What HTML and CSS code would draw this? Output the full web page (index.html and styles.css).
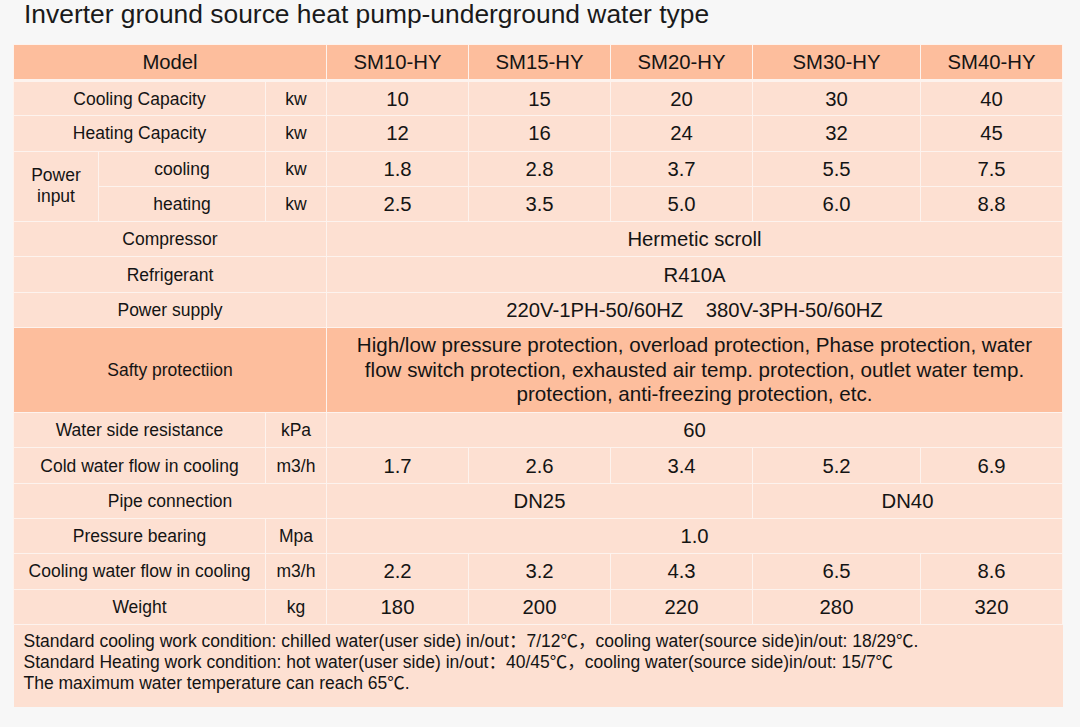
FILE: index.html
```html
<!DOCTYPE html>
<html>
<head>
<meta charset="utf-8">
<link rel="stylesheet" href="styles.css">
</head>
<body>
<h1 class="title">Inverter ground source heat pump-underground water type</h1>
<table class="spec">
  <colgroup>
    <col class="c0"><col class="c1"><col class="c2">
    <col class="cv"><col class="cv"><col class="cv"><col class="cw"><col class="cv">
  </colgroup>
  <tr class="head">
    <td colspan="3">Model</td>
    <td class="v">SM10-HY</td><td class="v">SM15-HY</td><td class="v">SM20-HY</td><td class="v">SM30-HY</td><td class="v">SM40-HY</td>
  </tr>
  <tr>
    <td colspan="2">Cooling Capacity</td><td>kw</td>
    <td class="v">10</td><td class="v">15</td><td class="v">20</td><td class="v">30</td><td class="v">40</td>
  </tr>
  <tr>
    <td colspan="2">Heating Capacity</td><td>kw</td>
    <td class="v">12</td><td class="v">16</td><td class="v">24</td><td class="v">32</td><td class="v">45</td>
  </tr>
  <tr>
    <td rowspan="2" class="pi">Power<br>input</td><td>cooling</td><td>kw</td>
    <td class="v">1.8</td><td class="v">2.8</td><td class="v">3.7</td><td class="v">5.5</td><td class="v">7.5</td>
  </tr>
  <tr>
    <td>heating</td><td>kw</td>
    <td class="v">2.5</td><td class="v">3.5</td><td class="v">5.0</td><td class="v">6.0</td><td class="v">8.8</td>
  </tr>
  <tr>
    <td colspan="3">Compressor</td><td colspan="5" class="v">Hermetic scroll</td>
  </tr>
  <tr>
    <td colspan="3">Refrigerant</td><td colspan="5" class="v">R410A</td>
  </tr>
  <tr>
    <td colspan="3">Power supply</td><td colspan="5" class="v">220V-1PH-50/60HZ&nbsp;&nbsp;&nbsp; 380V-3PH-50/60HZ</td>
  </tr>
  <tr class="safety">
    <td colspan="3">Safty protectiion</td>
    <td colspan="5" class="v sv">High/low pressure protection, overload protection, Phase protection, water<br>flow switch protection, exhausted air temp. protection, outlet water temp.<br>protection, anti-freezing protection, etc.</td>
  </tr>
  <tr>
    <td colspan="2">Water side resistance</td><td>kPa</td><td colspan="5" class="v">60</td>
  </tr>
  <tr>
    <td colspan="2">Cold water flow in cooling</td><td>m3/h</td>
    <td class="v">1.7</td><td class="v">2.6</td><td class="v">3.4</td><td class="v">5.2</td><td class="v">6.9</td>
  </tr>
  <tr>
    <td colspan="3">Pipe connection</td><td colspan="3" class="v">DN25</td><td colspan="2" class="v">DN40</td>
  </tr>
  <tr>
    <td colspan="2">Pressure bearing</td><td>Mpa</td><td colspan="5" class="v">1.0</td>
  </tr>
  <tr>
    <td colspan="2">Cooling water flow in cooling</td><td>m3/h</td>
    <td class="v">2.2</td><td class="v">3.2</td><td class="v">4.3</td><td class="v">6.5</td><td class="v">8.6</td>
  </tr>
  <tr>
    <td colspan="2">Weight</td><td>kg</td>
    <td class="v">180</td><td class="v">200</td><td class="v">220</td><td class="v">280</td><td class="v">320</td>
  </tr>
  <tr class="foot">
    <td colspan="8">Standard cooling work condition: chilled water(user side) in/out：7/12℃，cooling water(source side)in/out: 18/29℃.<br>Standard Heating work condition: hot water(user side) in/out：40/45℃，cooling water(source side)in/out: 15/7℃<br>The maximum water temperature can reach 65℃.</td>
  </tr>
</table>
</body>
</html>
```
FILE: styles.css
```css
html, body {
  margin: 0;
  padding: 0;
  background: #f7f7f7;
  font-family: "Liberation Sans", Arial, "Noto Sans CJK SC", sans-serif;
  color: #141414;
}
.title {
  margin: 0;
  padding-left: 24px;
  font-size: 26.4px;
  line-height: 28px;
  font-weight: normal;
  color: #1a1a1a;
}
.spec {
  margin: 16px 0 0 13px;
  width: 1048px;
  table-layout: fixed;
  border-collapse: collapse;
}
.c0 { width: 85px; }
.c1 { width: 167px; }
.c2 { width: 61px; }
.cv { width: 142px; }
.cw { width: 168px; }
.spec td {
  border: 1.5px solid #fdf3ee;
  background: #fde0d2;
  text-align: center;
  vertical-align: middle;
  font-size: 17.5px;
  padding: 0;
  line-height: 20px;
}
.spec tr { height: 35.3px; }
.spec td.v { font-size: 20.3px; }
.spec tr.head td {
  background: #fdbe9d;
  font-size: 20.3px;
  border-bottom-width: 3px;
}
.spec tr.head { height: 36px; }
.spec tr.safety td { background: #fdbe9d; }
.spec tr.safety { height: 85px; }
.spec td.sv { line-height: 24.5px; font-size: 20.6px; }
.spec td.pi { line-height: 21px; }
.spec tr.foot { height: 83px; }
.spec tr.foot td {
  text-align: left;
  vertical-align: top;
  font-size: 17.5px;
  line-height: 21.3px;
  padding: 6px 0 0 10px;
  border-bottom: none;
  border-left: none;
  border-right: none;
}
```
